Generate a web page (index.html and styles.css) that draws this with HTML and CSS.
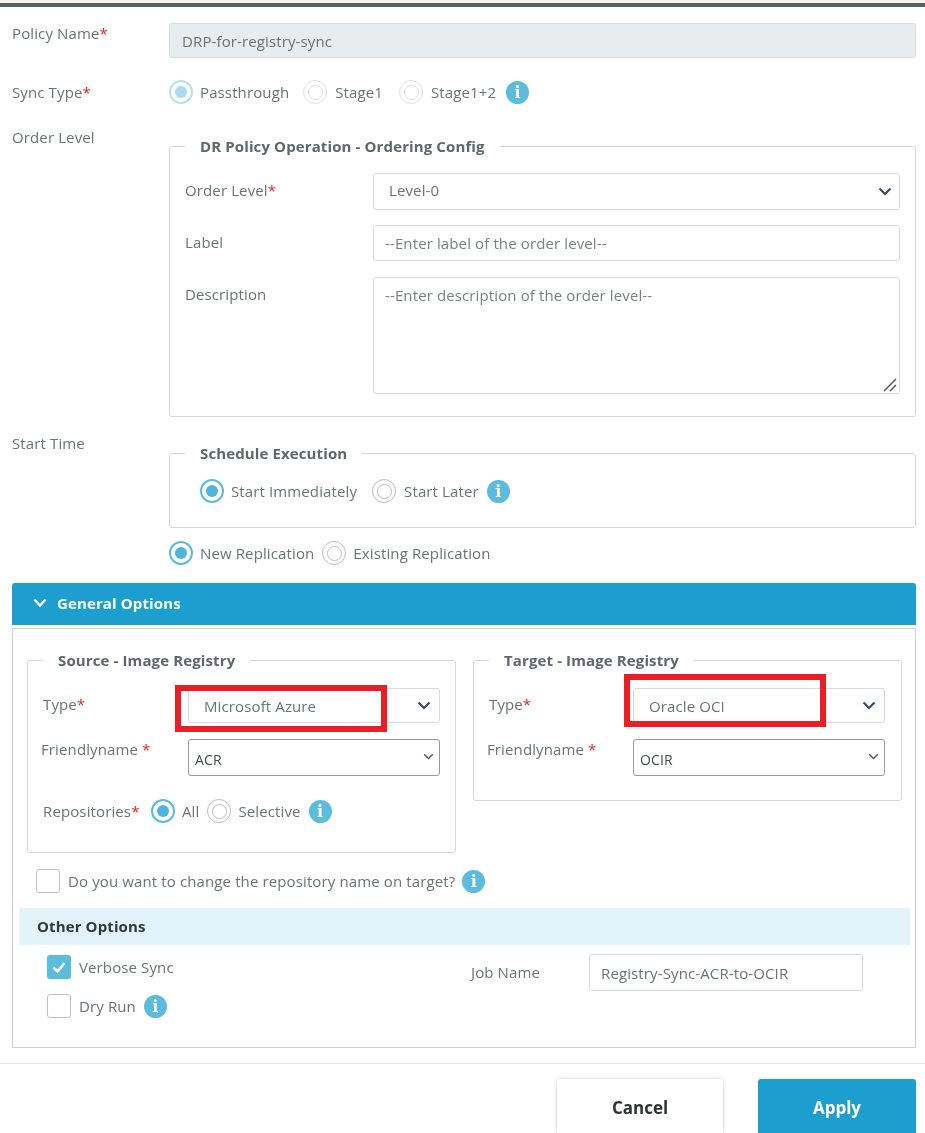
FILE: index.html
```html
<!DOCTYPE html>
<html lang="en">
<head>
<meta charset="utf-8">
<title>DR Policy</title>
<link rel="stylesheet" href="styles.css">
</head>
<body>
<div class="topbar"></div>
<main class="form">
  <div class="row policy">
    <label class="lbl">Policy Name<span class="req">*</span></label>
    <input class="ctl ctl-disabled" value="DRP-for-registry-sync" disabled>
  </div>
  <div class="row sync">
    <label class="lbl">Sync Type<span class="req">*</span></label>
    <div class="radios">
      <span class="radio on faded"></span><span class="rtext">Passthrough</span>
      <span class="radio faded"></span><span class="rtext">Stage1</span>
      <span class="radio faded"></span><span class="rtext">Stage1+2</span>
      <span class="info">i</span>
    </div>
  </div>
  <div class="row order">
    <label class="lbl">Order Level</label>
    <fieldset class="fs fs-order">
      <legend>DR Policy Operation - Ordering Config</legend>
      <div class="fgrid">
        <label class="lbl">Order Level<span class="req">*</span></label>
        <div class="ctl sel sel-tall"><span>Level-0</span><svg class="chev" viewBox="0 0 14 9"><polyline points="1.5,1.5 7,7 12.5,1.5"/></svg></div>
        <label class="lbl">Label</label>
        <input class="ctl" placeholder="--Enter label of the order level--">
        <label class="lbl lbl-desc">Description</label>
        <div class="area-wrap">
          <textarea class="ctl area" placeholder="--Enter description of the order level--"></textarea>
          <svg class="grip" viewBox="0 0 14 14"><line x1="1" y1="13" x2="13" y2="1"/><line x1="7" y1="13" x2="13" y2="7"/></svg>
        </div>
      </div>
    </fieldset>
  </div>
  <div class="row start">
    <label class="lbl">Start Time</label>
    <fieldset class="fs fs-sched">
      <legend>Schedule Execution</legend>
      <div class="radios">
        <span class="radio on"></span><span class="rtext">Start Immediately</span>
        <span class="radio"></span><span class="rtext">Start Later</span>
        <span class="info">i</span>
      </div>
    </fieldset>
  </div>
  <div class="radios repl">
    <span class="radio on"></span><span class="rtext">New Replication</span>
    <span class="radio"></span><span class="rtext">Existing Replication</span>
  </div>
  <div class="acc-head">
    <svg class="acc-chev" viewBox="0 0 14 10"><polyline points="1.5,1.5 7,7.5 12.5,1.5"/></svg>
    <span>General Options</span>
  </div>
  <section class="panel">
    <div class="regs">
      <fieldset class="fs reg">
        <legend>Source - Image Registry</legend>
        <div class="rgrid">
          <label class="lbl">Type<span class="req">*</span></label>
          <div class="marked">
            <div class="ctl sel sel-short"><span class="indent">Microsoft Azure</span><svg class="chev" viewBox="0 0 14 9"><polyline points="1.5,1.5 7,7 12.5,1.5"/></svg></div>
            <span class="redbox red-src"></span>
          </div>
          <label class="lbl shift">Friendlyname <span class="req">*</span></label>
          <div class="ctl sel sel-native"><span>ACR</span><svg class="chev thin" viewBox="0 0 14 9"><polyline points="1.5,1.5 7,7 12.5,1.5"/></svg></div>
        </div>
        <div class="repos">
          <label class="lbl">Repositories<span class="req">*</span></label>
          <div class="radios">
            <span class="radio on"></span><span class="rtext">All</span>
            <span class="radio"></span><span class="rtext">Selective</span>
            <span class="info">i</span>
          </div>
        </div>
      </fieldset>
      <fieldset class="fs reg reg-target">
        <legend>Target - Image Registry</legend>
        <div class="rgrid">
          <label class="lbl">Type<span class="req">*</span></label>
          <div class="marked">
            <div class="ctl sel sel-short"><span class="indent">Oracle OCI</span><svg class="chev" viewBox="0 0 14 9"><polyline points="1.5,1.5 7,7 12.5,1.5"/></svg></div>
            <span class="redbox red-tgt"></span>
          </div>
          <label class="lbl shift">Friendlyname <span class="req">*</span></label>
          <div class="ctl sel sel-native"><span>OCIR</span><svg class="chev thin" viewBox="0 0 14 9"><polyline points="1.5,1.5 7,7 12.5,1.5"/></svg></div>
        </div>
      </fieldset>
    </div>
    <div class="check-row rename">
      <span class="check"></span>
      <span class="rtext">Do you want to change the repository name on target?</span>
      <span class="info">i</span>
    </div>
    <div class="other-head">Other Options</div>
    <div class="other">
      <div class="checks">
        <div class="check-row">
          <span class="check checked"><svg viewBox="0 0 24 24"><polyline points="6.5,12.5 10.5,16.5 17.5,8"/></svg></span>
          <span class="rtext">Verbose Sync</span>
        </div>
        <div class="check-row">
          <span class="check"></span>
          <span class="rtext">Dry Run</span>
          <span class="info">i</span>
        </div>
      </div>
      <div class="job">
        <label class="lbl">Job Name</label>
        <input class="ctl job-input" value="Registry-Sync-ACR-to-OCIR">
      </div>
    </div>
  </section>
</main>
<footer class="foot">
  <button class="btn cancel">Cancel</button>
  <button class="btn apply">Apply</button>
</footer>
</body>
</html>
```
FILE: styles.css
```css
* { box-sizing: border-box; }
html, body { margin: 0; height: 1133px; overflow: hidden; background: #fff; }
body { font-family: "Open Sans", "Liberation Sans", sans-serif; font-size: 15px; letter-spacing: .12px; color: #6c7278; filter: blur(0.35px); }
.topbar { height: 7px; background: #54606f; border-top: 3px solid #f4f3e8; }
.form { padding: 0 9px 0 12px; }
.row { display: grid; grid-template-columns: 157px 1fr; }
.lbl { display: block; line-height: 19px; color: #6c7278; }
.req { color: #f01c24; }
.policy { margin-top: 16px; }
.policy .lbl { margin-top: 1px; }
.sync { margin-top: 22px; align-items: center; height: 24px; }
.order { margin-top: 24px; }
.start { margin-top: 17px; }
.ctl { display: block; width: 100%; height: 36px; padding: 0 11px; font: inherit; letter-spacing: inherit; color: #6c7278; background: #fff; border: 1px solid #d6dbe0; border-radius: 3px; outline: 0; }
.ctl::placeholder { color: #7b8086; opacity: 1; }
.ctl-disabled { height: 35px; padding: 0 12px; background: #e9ecef; border-color: #d9dcdf; }
.radios { display: flex; align-items: center; height: 24px; }
.radio { position: relative; flex: none; width: 24px; height: 24px; margin-right: 7px; border: 1.5px solid #bdbdbd; border-radius: 50%; }
.radio::after { content: ""; position: absolute; inset: 3.5px; border: 1px solid #bdbdbd; border-radius: 50%; }
.radio.on { border: 2px solid #5bbcdd; }
.radio.on::after { inset: 4px; background: #4fb6da; border: 0; }
.radio.faded { border-color: #dedede; }
.radio.faded::after { border-color: #dedede; }
.radio.on.faded { border-color: #b5e1f0; }
.radio.on.faded::after { background: #a9dcee; }
.rtext { margin-right: 8px; line-height: 19px; color: #6c7278; white-space: nowrap; }
.sync .rtext { margin-right: 14px; }
.sync .rtext:nth-child(4) { margin-right: 16px; }
.sync .radio { margin-right: 8px; }
.sync .radio.on { margin-right: 7px; }
.sync .info { margin-left: -4px; }
.fs-sched .rtext { margin-right: 15px; }
.fs-sched .radio { margin-right: 8px; }
.fs-sched .radio.on { margin-right: 7px; }
.fs-sched .info { margin-left: -7px; }
.info { flex: none; display: inline-flex; align-items: center; justify-content: center; width: 23px; height: 23px; border-radius: 50%; background: #5bbcdd; color: #fff; font-family: "DejaVu Serif", serif; font-weight: 700; font-size: 16px; }
.fs { min-width: 0; margin: 0; border: 1px solid #d4d6d8; border-radius: 3px; }
.fs legend { margin-left: 0; padding: 0 15px; font-weight: 700; line-height: 20px; color: #5f666d; }
.fs-order { margin-top: 8px; padding: 17px 15px 22px; }
.fs-sched { margin-top: 9px; padding: 16px 30px 24px; }
.fs-sched legend { margin-left: -15px; }
.fgrid { display: grid; grid-template-columns: 188px 1fr; row-gap: 15px; }
.fgrid .lbl { margin-top: 8px; }
.fgrid .lbl-desc { margin-top: 9px; }
.sel { display: flex; align-items: center; justify-content: space-between; }
.sel-tall { height: 37px; padding: 0 7px 3px 15px; }
.sel-tall .chev { margin-top: 3px; }
.area-wrap { position: relative; margin-top: 1px; }
.area { height: 117px; padding-top: 7px; resize: none; }
.grip { position: absolute; right: 3px; bottom: 2px; width: 14px; height: 14px; stroke: #555; stroke-width: 1.4; }
.chev { flex: none; width: 14px; height: 9px; fill: none; stroke: #3f4a55; stroke-width: 2.2; }
.chev.thin { width: 11px; height: 7px; margin: -6px 0 0; stroke: #555; stroke-width: 1.8; }
.repl { margin: 13px 0 0 157px; }
.acc-head { display: flex; align-items: center; height: 42px; margin-top: 18px; padding: 0 0 2px 21px; background: #1c9fce; border-radius: 3px 3px 0 0; color: #fff; font-weight: 700; }
.acc-chev { width: 14px; height: 10px; margin-right: 10px; fill: none; stroke: #fff; stroke-width: 2.4; }
.panel { margin-top: 3px; height: 420px; padding: 21px 13px 0 14px; border: 1px solid #cfd1d3; }
.regs { display: grid; grid-template-columns: 429px 429px; column-gap: 17px; align-items: start; }
.reg { padding: 18px 15px 29px; }
.reg-target { padding: 18px 16px 24px 15px; }
.rgrid { display: grid; grid-template-columns: 145px 1fr; row-gap: 16px; }
.reg-target .rgrid { grid-template-columns: 144px 1fr; }
.rgrid .lbl { margin-top: 7px; }
.rgrid .shift { margin: 1px 0 0 -2px; }
.marked { position: relative; }
.sel-short { height: 35px; padding: 0 8px 0 11px; }
.indent { padding-left: 4px; }
.sel-native { height: 37px; padding: 3px 5px 0 6px; font-size: 14px; color: #454a4f; border-color: #9a9a9a; }
.redbox { position: absolute; border: 6px solid #ee1c25; pointer-events: none; }
.red-src { left: -13px; top: -3px; width: 212px; height: 47px; }
.red-tgt { left: -9px; top: -14px; width: 202px; height: 53px; }
.repos { display: grid; grid-template-columns: 108px 1fr; align-items: center; margin-top: 23px; }
.check-row { display: flex; align-items: center; height: 24px; }
.check { flex: none; display: block; width: 24px; height: 24px; margin-right: 8px; border: 1.5px solid #bfc1c3; border-radius: 3px; background: #fff; }
.check.checked { background: #5bbcdd; border: 0; }
.check svg { display: block; fill: none; stroke: #fff; stroke-width: 2.6; }
.rename { margin: 16px 0 0 9px; }
.rename .rtext { margin-right: 7px; }
.other-head { display: flex; align-items: center; height: 37px; margin: 15px -8px 0; padding: 0 0 2px 18px; background: #e2f3fa; color: #33383d; font-weight: 700; }
.other { display: grid; grid-template-columns: 444px 1fr; margin-top: 9px; }
.checks { display: grid; row-gap: 15px; padding: 1px 0 0 20px; align-content: start; }
.job { display: grid; grid-template-columns: 118px 274px; align-items: center; align-self: start; }
.job-input { height: 37px; }
.foot { display: flex; justify-content: flex-end; column-gap: 35px; margin-top: 15px; padding: 15px 9px 0 0; border-top: 1px solid #e3e6ea; }
.btn { width: 166px; height: 54px; padding-top: 4px; font: inherit; font-size: 17px; font-weight: 700; border: 0; border-radius: 3px 3px 0 0; }
.cancel { color: #2f3338; background: #fff; box-shadow: 0 0 4px rgba(0,0,0,.2); }
.apply { width: 158px; color: #fff; background: #1c9fce; }
```
